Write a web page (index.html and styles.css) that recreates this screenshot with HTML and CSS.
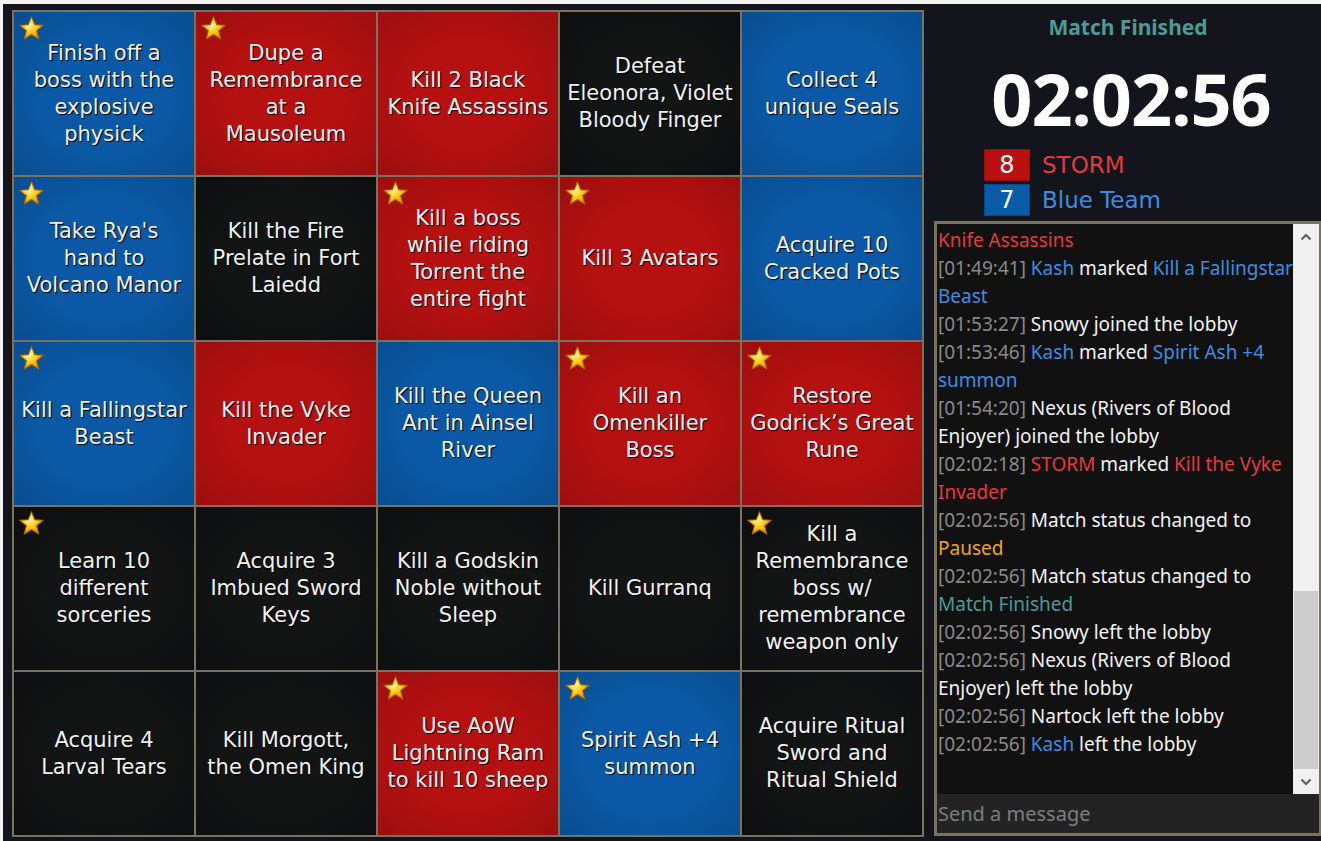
FILE: index.html
```html
<!DOCTYPE html>
<html lang="en">
<head>
<meta charset="utf-8">
<title>Bingo Match</title>
<link rel="stylesheet" href="styles.css">
</head>
<body>
<svg class="defs" width="0" height="0" aria-hidden="true">
  <defs>
    <radialGradient id="gold" cx="0.38" cy="0.35" r="0.7">
      <stop offset="0" stop-color="#fff7b8"/>
      <stop offset="0.4" stop-color="#ffd628"/>
      <stop offset="1" stop-color="#e28c00"/>
    </radialGradient>
    <symbol id="star" viewBox="0 0 24 24">
      <path d="M12 1.5 L14.82 8.62 L22.46 9.1 L16.56 13.98 L18.47 21.4 L12 17.3 L5.53 21.4 L7.44 13.98 L1.54 9.1 L9.18 8.62 Z" fill="url(#gold)" stroke="#a86400" stroke-width="0.9" stroke-linejoin="round"/>
    </symbol>
  </defs>
</svg>
<div class="app">
  <div class="board">
    <div class="cell blue"><svg class="star"><use href="#star"/></svg><span class="goal">Finish off a<br>boss with the<br>explosive<br>physick</span></div>
    <div class="cell red"><svg class="star"><use href="#star"/></svg><span class="goal">Dupe a<br>Remembrance<br>at a<br>Mausoleum</span></div>
    <div class="cell red"><span class="goal">Kill 2 Black<br>Knife Assassins</span></div>
    <div class="cell black"><span class="goal">Defeat<br>Eleonora, Violet<br>Bloody Finger</span></div>
    <div class="cell blue"><span class="goal">Collect 4<br>unique Seals</span></div>

    <div class="cell blue"><svg class="star"><use href="#star"/></svg><span class="goal">Take Rya's<br>hand to<br>Volcano Manor</span></div>
    <div class="cell black"><span class="goal">Kill the Fire<br>Prelate in Fort<br>Laiedd</span></div>
    <div class="cell red"><svg class="star"><use href="#star"/></svg><span class="goal">Kill a boss<br>while riding<br>Torrent the<br>entire fight</span></div>
    <div class="cell red"><svg class="star"><use href="#star"/></svg><span class="goal">Kill 3 Avatars</span></div>
    <div class="cell blue"><span class="goal">Acquire 10<br>Cracked Pots</span></div>

    <div class="cell blue"><svg class="star"><use href="#star"/></svg><span class="goal">Kill a Fallingstar<br>Beast</span></div>
    <div class="cell red"><span class="goal">Kill the Vyke<br>Invader</span></div>
    <div class="cell blue"><span class="goal">Kill the Queen<br>Ant in Ainsel<br>River</span></div>
    <div class="cell red"><svg class="star"><use href="#star"/></svg><span class="goal">Kill an<br>Omenkiller<br>Boss</span></div>
    <div class="cell red"><svg class="star"><use href="#star"/></svg><span class="goal">Restore<br>Godrick’s Great<br>Rune</span></div>

    <div class="cell black"><svg class="star"><use href="#star"/></svg><span class="goal">Learn 10<br>different<br>sorceries</span></div>
    <div class="cell black"><span class="goal">Acquire 3<br>Imbued Sword<br>Keys</span></div>
    <div class="cell black"><span class="goal">Kill a Godskin<br>Noble without<br>Sleep</span></div>
    <div class="cell black"><span class="goal">Kill Gurranq</span></div>
    <div class="cell black"><svg class="star"><use href="#star"/></svg><span class="goal">Kill a<br>Remembrance<br>boss w/<br>remembrance<br>weapon only</span></div>

    <div class="cell black"><span class="goal">Acquire 4<br>Larval Tears</span></div>
    <div class="cell black"><span class="goal">Kill Morgott,<br>the Omen King</span></div>
    <div class="cell red"><svg class="star"><use href="#star"/></svg><span class="goal">Use AoW<br>Lightning Ram<br>to kill 10 sheep</span></div>
    <div class="cell blue"><svg class="star"><use href="#star"/></svg><span class="goal">Spirit Ash +4<br>summon</span></div>
    <div class="cell black"><span class="goal">Acquire Ritual<br>Sword and<br>Ritual Shield</span></div>
  </div>

  <aside class="side">
    <h1 class="status">Match Finished</h1>
    <div class="timer">02:02:56</div>
    <ul class="teams">
      <li class="team team-red"><span class="score">8</span><span class="name">STORM</span></li>
      <li class="team team-blue"><span class="score">7</span><span class="name">Blue Team</span></li>
    </ul>
    <section class="chat">
      <div class="chat-body">
        <div class="log">
          <p class="msg"><span class="c-red">Knife Assassins</span></p>
          <p class="msg"><span class="ts">[01:49:41]</span> <span class="c-blue">Kash</span> marked <span class="c-blue">Kill a Fallingstar Beast</span></p>
          <p class="msg"><span class="ts">[01:53:27]</span> Snowy joined the lobby</p>
          <p class="msg"><span class="ts">[01:53:46]</span> <span class="c-blue">Kash</span> marked <span class="c-blue">Spirit Ash +4 summon</span></p>
          <p class="msg"><span class="ts">[01:54:20]</span> Nexus (Rivers of Blood Enjoyer) joined the lobby</p>
          <p class="msg"><span class="ts">[02:02:18]</span> <span class="c-red">STORM</span> marked <span class="c-red">Kill the Vyke Invader</span></p>
          <p class="msg"><span class="ts">[02:02:56]</span> Match status changed to <span class="c-orange">Paused</span></p>
          <p class="msg"><span class="ts">[02:02:56]</span> Match status changed to <span class="c-teal">Match Finished</span></p>
          <p class="msg"><span class="ts">[02:02:56]</span> Snowy left the lobby</p>
          <p class="msg"><span class="ts">[02:02:56]</span> Nexus (Rivers of Blood Enjoyer) left the lobby</p>
          <p class="msg"><span class="ts">[02:02:56]</span> Nartock left the lobby</p>
          <p class="msg"><span class="ts">[02:02:56]</span> <span class="c-blue">Kash</span> left the lobby</p>
        </div>
        <div class="scrollbar" aria-hidden="true">
          <span class="arrow"><svg width="12" height="8" viewBox="0 0 12 8"><path d="M1.5 6.5 L6 2 L10.5 6.5" fill="none" stroke="#606060" stroke-width="2.2"/></svg></span>
          <span class="track"><span class="thumb"></span></span>
          <span class="arrow"><svg width="12" height="8" viewBox="0 0 12 8"><path d="M1.5 1.5 L6 6 L10.5 1.5" fill="none" stroke="#606060" stroke-width="2.2"/></svg></span>
        </div>
      </div>
      <input class="chat-input" type="text" placeholder="Send a message">
    </section>
  </aside>
</div>
</body>
</html>
```

FILE: styles.css
```css
* { box-sizing: border-box; }

html, body {
  margin: 0;
  height: 100%;
}

body {
  background: #14141c;
  border-top: 4px solid #f3f3f3;
  border-left: 3px solid #f0f0f0;
  overflow: hidden;
  font-family: "DejaVu Sans", sans-serif;
}

.defs {
  position: absolute;
  width: 0;
  height: 0;
}

.app {
  display: flex;
  align-items: flex-start;
  padding: 6px 0 0 9px;
}

/* ---------- board ---------- */
.board {
  flex: none;
  display: grid;
  grid-template-columns: repeat(5, 180px);
  grid-template-rows: repeat(5, 163px);
  gap: 2px;
  padding: 2px;
  background: #78725f;
}

.cell {
  position: relative;
  display: flex;
  align-items: center;
  justify-content: center;
  text-align: center;
  color: #f1f1f1;
  font: 21px/27px "DejaVu Sans", sans-serif;
  text-shadow: 1px 1px 1px #000;
}

.cell.blue {
  background: radial-gradient(ellipse at center, #0b59a6 45%, #094d90 100%);
}

.cell.red {
  background: radial-gradient(ellipse at center, #b61111 45%, #9b0e0e 100%);
}

.cell.black {
  background: radial-gradient(ellipse at center, #131515 45%, #0d0e0f 100%);
}

.star {
  position: absolute;
  left: 4px;
  top: 3px;
  width: 27px;
  height: 27px;
}

/* ---------- side panel ---------- */
.side {
  flex: none;
  width: 388px;
  margin-left: 10px;
  margin-top: -6px;
  display: flex;
  flex-direction: column;
}

.status {
  margin: 0;
  padding-top: 9px;
  text-align: center;
  font: 700 21px/28px "Noto Sans", sans-serif;
  color: #4f9a95;
}

.timer {
  margin-top: 14px;
  text-align: center;
  font: 700 72px/86px "Noto Sans", sans-serif;
  color: #fff;
  letter-spacing: -1px;
  padding-left: 6px;
}

.teams {
  list-style: none;
  margin: 8px 0 0;
  padding: 0 0 0 50px;
  display: flex;
  flex-direction: column;
  gap: 3px;
}

.team {
  display: flex;
  align-items: center;
  gap: 12px;
}

.score {
  width: 46px;
  height: 32px;
  display: flex;
  align-items: center;
  justify-content: center;
  color: #fff;
  font: 24px/1 "DejaVu Sans", sans-serif;
}

.name {
  font: 23px/32px "DejaVu Sans", sans-serif;
}

.team-red .score { background: #b91111; border: 1px solid #8c1212; }
.team-red .name { color: #e23b3b; }
.team-blue .score { background: #0b5ba9; border: 1px solid #0a4682; }
.team-blue .name { color: #3a8de0; }

/* ---------- chat ---------- */
.chat {
  margin-top: 5px;
  height: 615px;
  border: 3px solid #78725f;
  display: flex;
  flex-direction: column;
  background: #111111;
}

.chat-body {
  flex: 1;
  display: flex;
  min-height: 0;
}

.log {
  flex: 1;
  overflow: hidden;
  padding: 2px 0 0 1px;
  font: 19px/28px "Noto Sans", sans-serif;
  color: #f2f2f2;
}

.msg { margin: 0; }

.ts { color: #8a8a8a; }
.c-blue { color: #3d8ee0; }
.c-red { color: #e53a3a; }
.c-orange { color: #f2a51e; }
.c-teal { color: #4f9a95; }

.scrollbar {
  flex: none;
  width: 26px;
  display: flex;
  flex-direction: column;
  background: #f0f0f0;
}

.arrow {
  height: 25px;
  display: flex;
  align-items: center;
  justify-content: center;
}

.track {
  flex: 1;
  display: flex;
  flex-direction: column;
  justify-content: flex-end;
}

.thumb {
  display: block;
  height: 178px;
  margin: 0 1px;
  background: #cdcdcd;
}

.chat-input {
  flex: none;
  height: 39px;
  border: 0;
  outline: 0;
  margin: 0;
  padding: 0 1px;
  background: #232323;
  color: #eee;
  font: 20px "Noto Sans", sans-serif;
}

.chat-input::placeholder { color: #7e7e7e; }
```
